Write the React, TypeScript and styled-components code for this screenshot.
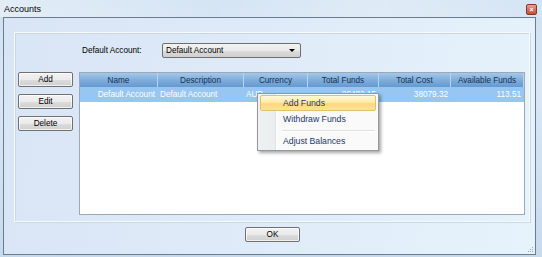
import React from 'react';
import styled, { createGlobalStyle } from 'styled-components';

const Global = createGlobalStyle`
  html, body { margin: 0; padding: 0; width: 542px; height: 257px; overflow: hidden; }
  body { font-family: "Liberation Sans", Arial, sans-serif; }
  * { box-sizing: border-box; }
`;

const Window = styled.div`
  width: 542px;
  height: 257px;
  display: flex;
  flex-direction: column;
  background: linear-gradient(180deg, #cde0f2 0%, #d9e7f5 35%, #c6daee 100%);
`;

const TitleBar = styled.div`
  height: 17px;
  display: flex;
  align-items: center;
  justify-content: space-between;
  padding: 0 5px 0 4px;
  background: linear-gradient(90deg, rgba(255,255,255,0.4), rgba(255,255,255,0.15) 40%, rgba(255,255,255,0.35) 70%, rgba(255,255,255,0.15));
`;

const Title = styled.span`
  font-size: 9px;
  color: #000;
  text-shadow: 0 0 6px rgba(255,255,255,0.9);
`;

const CloseBtn = styled.div`
  width: 11px;
  height: 11px;
  margin-top: 1px;
  border: 1px solid #7a3a2c;
  border-radius: 2px;
  background: linear-gradient(180deg, #e8a692 0%, #d8705a 50%, #c7503a 100%);
  display: flex;
  align-items: center;
  justify-content: center;
  color: #fff;
  font-size: 7px;
  line-height: 1;
  font-weight: bold;
`;

const Client = styled.div`
  position: relative;
  flex: 1;
  margin: 0 6px 2px 3px;
  border: 1px solid #6c7b8e;
  background: linear-gradient(100deg, #d8e5f5 0%, #dfebf8 50%, #e6f3fb 100%);
  display: flex;
  flex-direction: column;
`;

const GroupBox = styled.div`
  margin: 14px 5px 0 10px;
  height: 190px;
  border: 1px solid #f6fafd;
  box-shadow: inset 1px 1px 0 #c9d6e4, 1px 1px 0 #cad7e5;
  padding: 10px 4px 6px 3px;
  display: grid;
  grid-template-columns: 55px 1fr;
  grid-template-rows: 15px 1fr;
  column-gap: 6px;
  row-gap: 14px;
`;

const TopRow = styled.div`
  grid-column: 1 / 3;
  display: flex;
  align-items: center;
  padding-left: 64px;
`;

const Label = styled.span`
  width: 80px;
  font-size: 8.2px;
  color: #000;
`;

const DropDown = styled.div`
  width: 139px;
  height: 15px;
  border: 1px solid #707070;
  border-radius: 2px;
  background: linear-gradient(180deg, #f2f2f2 0%, #ebebeb 50%, #dddddd 51%, #cfcfcf 100%);
  display: flex;
  align-items: center;
  justify-content: space-between;
  padding: 0 5px 0 3px;
  font-size: 8.2px;
  color: #000;
`;

const Arrow = styled.span`
  width: 0;
  height: 0;
  border-left: 3px solid transparent;
  border-right: 3px solid transparent;
  border-top: 3px solid #000;
`;

const ButtonCol = styled.div`
  display: flex;
  flex-direction: column;
  gap: 7px;
`;

const Button = styled.div<{ $w?: number }>`
  width: ${p => p.$w ?? 55}px;
  height: 15px;
  border: 1px solid #707070;
  border-radius: 2px;
  background: linear-gradient(180deg, #f2f2f2 0%, #ebebeb 50%, #dddddd 51%, #cfcfcf 100%);
  box-shadow: inset 0 0 0 1px rgba(255,255,255,0.7);
  display: flex;
  align-items: center;
  justify-content: center;
  font-size: 8.2px;
  color: #000;
`;

const GridBox = styled.div`
  position: relative;
  border: 1px solid #9ca8b6;
  background: #fff;
`;

const cols = '78px 86px 64px 71px 72px 1fr';

const HeaderRow = styled.div`
  display: grid;
  grid-template-columns: ${cols};
  height: 14px;
  background: linear-gradient(180deg, #a4c8ea 0%, #82b0de 45%, #6499cf 100%);
`;

const HeaderCell = styled.div`
  display: flex;
  align-items: center;
  justify-content: center;
  font-size: 8.2px;
  color: #17304f;
  border-right: 1px solid #b6d3ef;
  white-space: nowrap;
  overflow: hidden;
`;

const DataRow = styled.div<{ $selected?: boolean }>`
  display: grid;
  grid-template-columns: ${cols};
  height: 15px;
  background: ${p => (p.$selected ? '#96c6f1' : 'transparent')};
  color: ${p => (p.$selected ? '#fff' : '#000')};
`;

const DataCell = styled.div<{ $align: 'left' | 'right' }>`
  display: flex;
  align-items: center;
  justify-content: ${p => (p.$align === 'right' ? 'flex-end' : 'flex-start')};
  padding: 0 3px 0 2px;
  font-size: 8.2px;
  white-space: nowrap;
  overflow: hidden;
`;

const Menu = styled.div`
  position: absolute;
  left: 177px;
  top: 20px;
  width: 122px;
  border: 1px solid #979797;
  background: #fafafa;
  padding: 1px;
  box-shadow: 2px 2px 3px rgba(0,0,0,0.35);
  display: flex;
  flex-direction: column;
  background-image: linear-gradient(90deg, #eef1f1 0px, #eaeeee 17px, #dfe3e3 17px, #dfe3e3 18px, #ffffff 18px, #ffffff 19px, #fafafa 19px);
`;

const MenuItem = styled.div<{ $hot?: boolean }>`
  height: 16px;
  display: flex;
  align-items: center;
  padding-left: 22px;
  font-size: 8.7px;
  color: #1b3868;
  border: 1px solid ${p => (p.$hot ? '#e2c070' : 'transparent')};
  border-radius: 2px;
  margin: 0 1px;
  background: ${p =>
    p.$hot ? 'linear-gradient(180deg, #fff8dc 0%, #ffeaa8 45%, #ffd978 55%, #ffe39a 100%)' : 'transparent'};
`;

const Separator = styled.div`
  height: 6px;
  display: flex;
  align-items: center;
  padding-left: 23px;
  padding-right: 2px;
  &::after {
    content: '';
    flex: 1;
    height: 1px;
    background: #e0e0e0;
    box-shadow: 0 1px 0 #fff;
  }
`;

const Footer = styled.div`
  flex: 1;
  display: flex;
  justify-content: center;
  padding: 5px 0 0 6px;
`;

const Grip = styled.svg`
  position: absolute;
  right: 1px;
  bottom: 1px;
`;

const columns = ['Name', 'Description', 'Currency', 'Total Funds', 'Total Cost', 'Available Funds'];

const row: { v: string; a: 'left' | 'right' }[] = [
  { v: 'Default Account', a: 'right' },
  { v: 'Default Account', a: 'left' },
  { v: 'AUD', a: 'left' },
  { v: '29482.15', a: 'right' },
  { v: '38079.32', a: 'right' },
  { v: '113.51', a: 'right' },
];

export default function App() {
  return (
    <>
      <Global />
      <Window>
        <TitleBar>
          <Title>Accounts</Title>
          <CloseBtn>×</CloseBtn>
        </TitleBar>
        <Client>
          <GroupBox>
            <TopRow>
              <Label>Default Account:</Label>
              <DropDown>
                <span>Default Account</span>
                <Arrow />
              </DropDown>
            </TopRow>
            <ButtonCol>
              <Button>Add</Button>
              <Button>Edit</Button>
              <Button>Delete</Button>
            </ButtonCol>
            <GridBox>
              <HeaderRow>
                {columns.map(c => (
                  <HeaderCell key={c}>{c}</HeaderCell>
                ))}
              </HeaderRow>
              <DataRow $selected>
                {row.map((c, i) => (
                  <DataCell key={i} $align={c.a}>
                    {c.v}
                  </DataCell>
                ))}
              </DataRow>
              <Menu>
                <MenuItem $hot>Add Funds</MenuItem>
                <MenuItem>Withdraw Funds</MenuItem>
                <Separator />
                <MenuItem>Adjust Balances</MenuItem>
              </Menu>
            </GridBox>
          </GroupBox>
          <Footer>
            <Button $w={55}>OK</Button>
          </Footer>
          <Grip width="6" height="6" viewBox="0 0 6 6">
            <rect x="4" y="0" width="1" height="1" fill="#9aa6b4" />
            <rect x="2" y="2" width="1" height="1" fill="#9aa6b4" />
            <rect x="4" y="2" width="1" height="1" fill="#9aa6b4" />
            <rect x="0" y="4" width="1" height="1" fill="#9aa6b4" />
            <rect x="2" y="4" width="1" height="1" fill="#9aa6b4" />
            <rect x="4" y="4" width="1" height="1" fill="#9aa6b4" />
          </Grip>
        </Client>
      </Window>
    </>
  );
}
